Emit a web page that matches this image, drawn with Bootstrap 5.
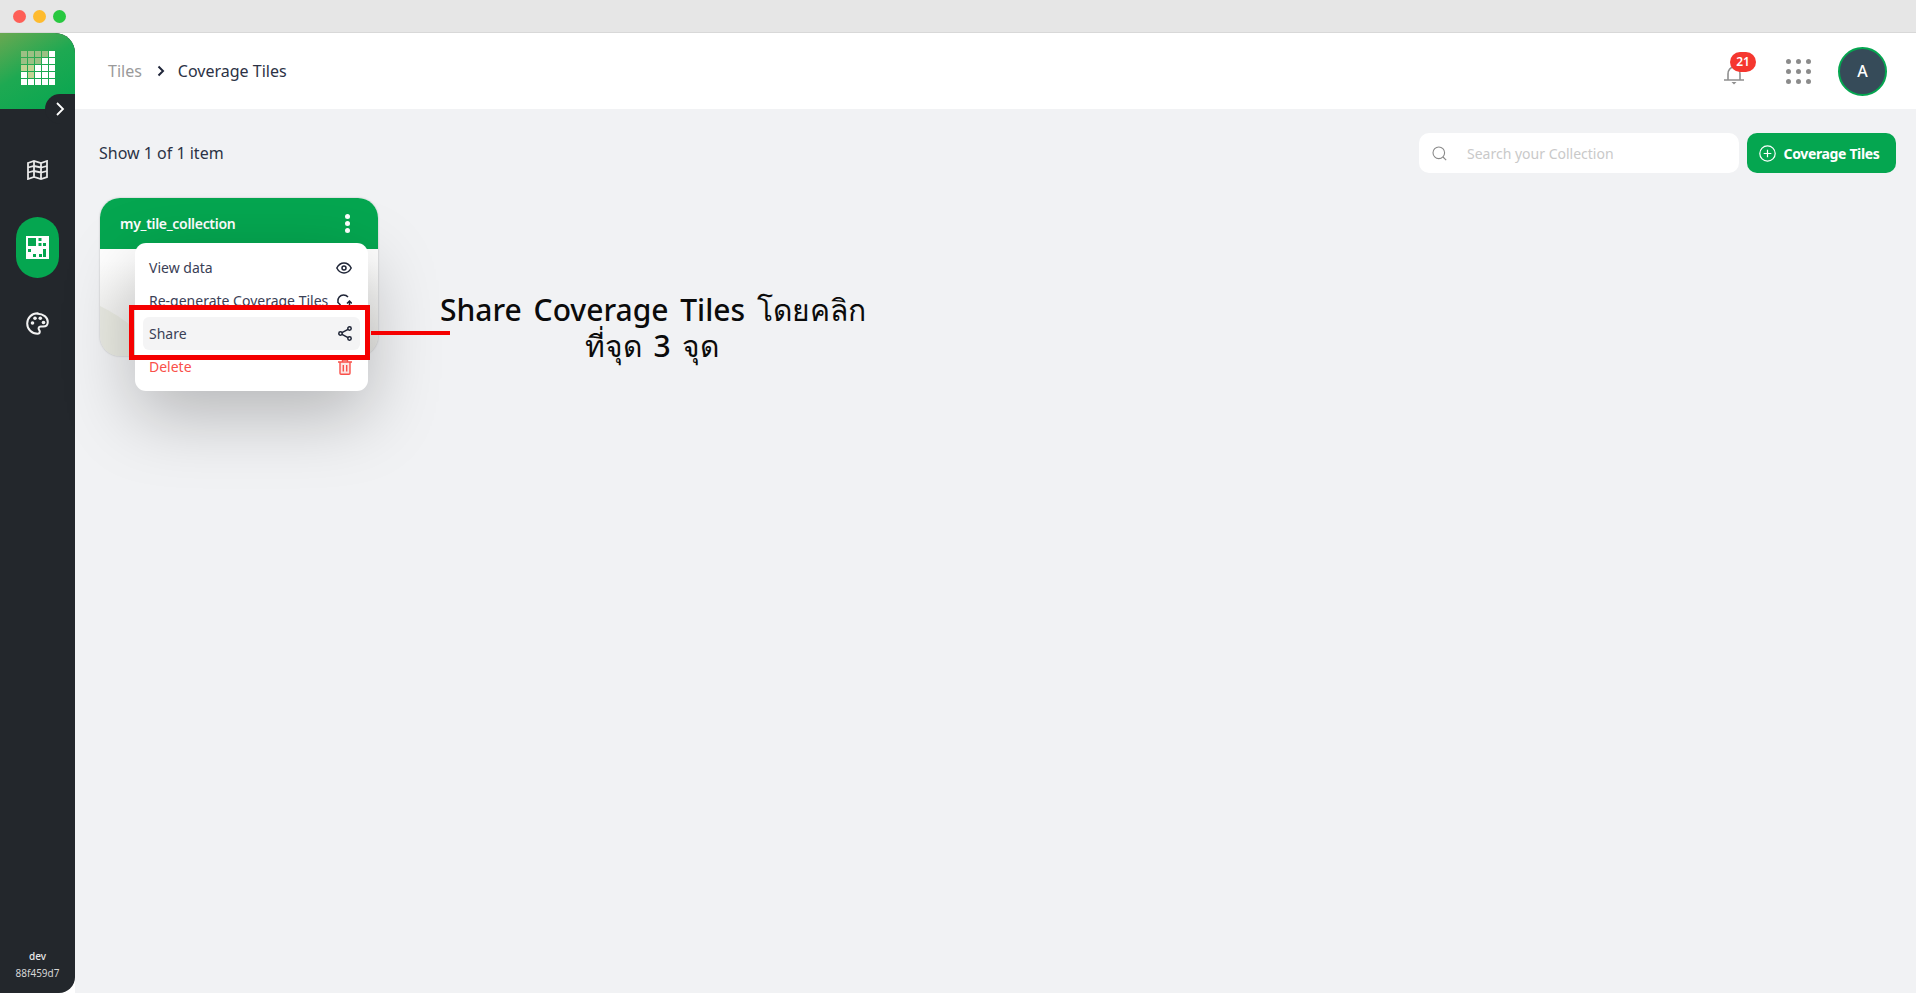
<!DOCTYPE html>
<html lang="th">
<head>
<meta charset="utf-8">
<title>Coverage Tiles</title>
<link href="https://cdn.jsdelivr.net/npm/bootstrap@5.3.0/dist/css/bootstrap.min.css" rel="stylesheet">
<style>
html,body{height:100%;}
body{font-family:"Noto Sans","Open Sans",sans-serif;background:#fff;color:#2b3245;overflow:hidden;}
.app-frame{height:993px;}
.title-strip{height:33px;background:#e6e6e6;border-bottom:1px solid #d8d8d8;padding-left:13px;gap:7px;}
.tl{width:13px;height:13px;border-radius:50%;}
.tl-r{background:#fe5f57;}.tl-y{background:#febb2e;}.tl-g{background:#28c840;}
.side-rail{width:75px;background:#23272c;border-top-right-radius:20px;border-bottom-right-radius:16px;position:relative;}
.logo-box{height:76px;background:linear-gradient(150deg,#6aa851 0%,#1ea952 45%,#06a650 100%);border-top-right-radius:20px;padding-top:18px;}
.logo-grid{display:grid;grid-template-columns:repeat(5,6px);grid-auto-rows:6px;gap:1px;}
.logo-grid span{display:block;background:#fff;}
.logo-grid .lg-a{background:#9cc084;}
.logo-grid .lg-b{background:#c2d394;}
.toggle-tab{position:absolute;left:45px;top:61px;width:30px;height:30px;background:#23272c;border-radius:15px 0 0 15px;}
.rail-nav{padding-top:51px;}
.rail-item{height:61px;width:43px;border-radius:22px;margin-top:37px;}
.rail-item.on{background:#05a650;}
.rail-palette{margin-top:34px;}
.ver-box{padding-bottom:11px;}
.ver-a{font-size:10px;font-weight:500;color:#e8e8e8;line-height:17px;}
.ver-b{font-size:10px;color:#d6d6d6;line-height:17px;}
.main-col{background:#f1f2f4;min-width:0;}
.top-head{height:76px;background:#fff;padding:0 29px 0 33px;}
.crumb-a{font-size:16px;color:#9a9a9a;}
.crumb-b{font-size:16px;color:#2b3245;}
.crumb-sep{margin:0 13px 0 15px;}
.bell-wrap{width:26px;height:26px;position:relative;margin-right:39px;}
.bell-badge{position:absolute;left:9px;top:-6px;width:26px;height:20px;border-radius:10px;background:#f5372f;color:#fff;font-size:12px;font-weight:600;line-height:20px;text-align:center;}
.dots-grid{display:grid;grid-template-columns:repeat(3,5px);grid-auto-rows:5px;gap:5px;margin-right:27px;}
.dots-grid i{background:#8b8b8b;border-radius:50%;display:block;}
.avatar-disc{width:49px;height:49px;border-radius:50%;background:#364b59;border:2px solid #05a650;color:#fff;font-size:16px;font-weight:500;}
.content-pad{padding:24px 20px 0 24px;position:relative;flex:1;}
.count-text{font-size:16px;color:#2b3245;position:relative;}
.search-bar{width:320px;height:40px;background:#fff;border-radius:10px;padding-left:13px;gap:20px;margin-right:8px;}
.search-bar span{font-size:14px;color:#c9c9c9;}
.add-btn{width:149px;height:40px;background:#05a650;border:0;border-radius:10px;color:#fff;font-size:14px;font-weight:700;gap:8px;letter-spacing:-.35px;padding:0 11px 0 6px;}
.tile-card{width:278px;height:158px;margin-top:25px;margin-left:1px;border-radius:20px;background:linear-gradient(180deg,#fff 40%,#e7e7e4 100%);box-shadow:0 0 2px rgba(0,0,0,.25);position:relative;}
.tile-head{height:51px;background:#05a650;border-radius:20px 20px 0 0;padding:0 28px 0 20px;color:#fff;font-size:14px;font-weight:600;letter-spacing:-.3px;}
.kebab{width:5px;}
.kebab i{display:block;width:5px;height:5px;border-radius:50%;background:#fff;margin-bottom:2px;}
.kebab i:last-child{margin-bottom:0;}
.leaf-shade{position:absolute;left:0;bottom:0;border-bottom-left-radius:20px;}
.pop-menu{position:absolute;left:35px;top:45px;width:233px;height:148px;background:#fff;border-radius:11px;padding:8px;box-shadow:0 24px 70px rgba(0,0,0,.25);}
.pop-row{height:33px;padding:0 8px 0 6px;border-radius:6px;font-size:14px;color:#3a4056;}
.pop-row.hl{background:#f4f4f5;}
.pop-row.del{color:#f9504a;}
.red-box{position:absolute;left:29px;top:107px;width:241px;height:55px;border:5px solid #f50000;}
.red-line{position:absolute;left:271px;top:133px;width:79px;height:4px;background:#f50000;}
.note-text{position:absolute;left:340px;top:94px;width:424px;text-align:center;font-size:30px;line-height:36px;color:#0b0b0b;font-weight:500;word-spacing:4px;white-space:nowrap;}
</style>
</head>
<body>
<div class="app-frame d-flex flex-column">
  <div class="title-strip d-flex align-items-center">
    <span class="tl tl-r"></span><span class="tl tl-y"></span><span class="tl tl-g"></span>
  </div>
  <div class="d-flex flex-grow-1">
    <aside class="side-rail d-flex flex-column flex-shrink-0">
      <div class="logo-box d-flex justify-content-center">
        <div class="logo-grid">
          <span class="lg-a"></span><span class="lg-a"></span><span class="lg-a"></span><span class="lg-a"></span><span></span>
          <span class="lg-a"></span><span class="lg-a"></span><span class="lg-a"></span><span></span><span></span>
          <span class="lg-b"></span><span class="lg-b"></span><span></span><span></span><span></span>
          <span></span><span class="lg-b"></span><span></span><span></span><span></span>
          <span></span><span></span><span></span><span></span><span></span>
        </div>
      </div>
      <div class="toggle-tab d-flex align-items-center justify-content-center">
        <svg width="10" height="16" viewBox="0 0 10 16" fill="none" stroke="#fff" stroke-width="1.8"><path d="M2 2l6 6-6 6"/></svg>
      </div>
      <nav class="rail-nav d-flex flex-column align-items-center">
        <svg width="21" height="20" viewBox="0 0 21 20" fill="none" stroke="#e9e9e9" stroke-width="1.8"><path d="M1 3l6-2 7 2 6-2v16l-6 2-7-2-6 2zM7 1v16M14 3v16M1 7.500l6-1.500 7 1.500 6-1.500M1 12.500l6-1.500 7 1.500 6-1.500"/></svg>
        <div class="rail-item on d-flex align-items-center justify-content-center">
          <svg width="23" height="23" viewBox="0 0 23 23"><path fill="#fff" fill-rule="evenodd" d="M0 0h23v23H0zM2 2v8h8V2zM12.500 2v3h3V2zM12.500 7v3h3V7zM17 7v3h3V7zM2 13v3h3v-3zM17 13v8h3v-8zM7 18v3h3v-3zM13 18v3h3v-3z"/></svg>
        </div>
        <svg class="rail-palette" width="23" height="23" viewBox="0 0 23 23" fill="none"><path stroke="#f2f2f2" stroke-width="2" d="M11.500 1.200C5.800 1.200 1.200 5.800 1.200 11.500s4.600 10.300 10.300 10.300c1.400 0 2.300-1 2.300-2.200 0-.6-.2-1-.6-1.500-.4-.5-.6-.9-.6-1.500 0-1.200 1-2.100 2.200-2.100h2.400c3 0 4.600-2 4.600-4.500 0-4.700-4.600-8.200-10.300-8.200z"/><circle cx="6.500" cy="11" r="1.800" fill="#f2f2f2"/><circle cx="9" cy="6.300" r="1.800" fill="#f2f2f2"/><circle cx="14.300" cy="6.300" r="1.800" fill="#f2f2f2"/><circle cx="17.500" cy="10.500" r="1.800" fill="#f2f2f2"/></svg>
      </nav>
      <div class="ver-box mt-auto text-center">
        <div class="ver-a">dev</div>
        <div class="ver-b">88f459d7</div>
      </div>
    </aside>
    <div class="main-col flex-grow-1 d-flex flex-column">
      <header class="top-head d-flex align-items-center">
        <span class="crumb-a">Tiles</span>
        <svg class="crumb-sep" width="8" height="12" viewBox="0 0 8 12" fill="none" stroke="#20263a" stroke-width="2"><path d="M1.500 1.500L6 6l-4.500 4.500"/></svg>
        <span class="crumb-b">Coverage Tiles</span>
        <div class="ms-auto d-flex align-items-center">
          <div class="bell-wrap">
            <svg width="26" height="26" viewBox="0 0 26 26" fill="none" stroke="#8f8f8f" stroke-width="1.600"><path d="M3 21h20M7 21v-6c0-4 2.500-7 6-7s6 3 6 7v6"/><path d="M10.500 23h5L13 25.500z" fill="#8f8f8f" stroke="none"/></svg>
            <span class="bell-badge">21</span>
          </div>
          <div class="dots-grid"><i></i><i></i><i></i><i></i><i></i><i></i><i></i><i></i><i></i></div>
          <div class="avatar-disc d-flex align-items-center justify-content-center">A</div>
        </div>
      </header>
      <section class="content-pad">
        <div class="d-flex align-items-center">
          <span class="count-text">Show 1 of 1 item</span>
          <div class="search-bar ms-auto d-flex align-items-center">
            <svg width="15" height="15" viewBox="0 0 15 15" fill="none" stroke="#8a8a8a" stroke-width="1.100"><circle cx="6.800" cy="6.800" r="5.800"/><path d="M11 11l3.200 3.200"/></svg>
            <span>Search your Collection</span>
          </div>
          <button class="add-btn d-flex align-items-center justify-content-center" type="button">
            <svg width="17" height="17" viewBox="0 0 17 17" fill="none" stroke="#fff" stroke-width="1.200"><circle cx="8.500" cy="8.500" r="7.700"/><path d="M8.500 4.700v7.600M4.700 8.500h7.600"/></svg>
            Coverage Tiles
          </button>
        </div>
        <div class="tile-card">
          <div class="tile-head d-flex align-items-center justify-content-between">
            <span>my_tile_collection</span>
            <span class="kebab"><i></i><i></i><i></i></span>
          </div>
          <svg class="leaf-shade" width="60" height="60" viewBox="0 0 60 60"><path d="M0 10C25 22 45 40 58 60H20Q0 60 0 40z" fill="#e9eae2"/></svg>
          <div class="pop-menu">
            <div class="pop-row d-flex align-items-center justify-content-between"><span>View data</span>
              <svg width="16" height="12" viewBox="0 0 16 12" fill="none" stroke="#1e2436" stroke-width="1.500"><path d="M.8 6C2.500 2.800 5 1 8 1s5.500 1.800 7.200 5C13.500 9.200 11 11 8 11S2.500 9.200.8 6z"/><circle cx="8" cy="6" r="2"/></svg></div>
            <div class="pop-row d-flex align-items-center justify-content-between"><span>Re-generate Coverage Tiles</span>
              <svg width="16" height="16" viewBox="0 0 16 16" fill="none" stroke="#1e2436" stroke-width="1.500"><path d="M2 9C1.500 5 4 2 7.500 2c2 0 3.500.8 4.500 2M13.500 8v6M11 10.500L13.500 8l2.300 2.500M4.500 12L1.500 9"/></svg></div>
            <div class="pop-row hl d-flex align-items-center justify-content-between"><span>Share</span>
              <svg width="14" height="15" viewBox="0 0 14 15" fill="none" stroke="#1e2436" stroke-width="1.500"><circle cx="11.500" cy="2.500" r="1.700"/><circle cx="2.500" cy="7.500" r="1.700"/><circle cx="11.500" cy="12.500" r="1.700"/><path d="M4 6.700l6-3.400M4 8.300l6 3.400"/></svg></div>
            <div class="pop-row del d-flex align-items-center justify-content-between"><span>Delete</span>
              <svg width="14" height="16" viewBox="0 0 14 16" fill="#fde4e2" stroke="#f9504a" stroke-width="1.400"><path d="M0 3h14M4.500 3V1h5v2M2 3v11.300c0 .5.300 1 1 1h8c.7 0 1-.5 1-1V3M5.300 6v6.500M8.700 6v6.500"/></svg></div>
          </div>
          <div class="red-box"></div>
          <div class="red-line"></div>
          <div class="note-text">Share Coverage Tiles โดยคลิก<br>ที่จุด 3 จุด</div>
        </div>
      </section>
    </div>
  </div>
</div>
<script src="https://cdn.jsdelivr.net/npm/bootstrap@5.3.0/dist/js/bootstrap.bundle.min.js"></script>
</body>
</html>
